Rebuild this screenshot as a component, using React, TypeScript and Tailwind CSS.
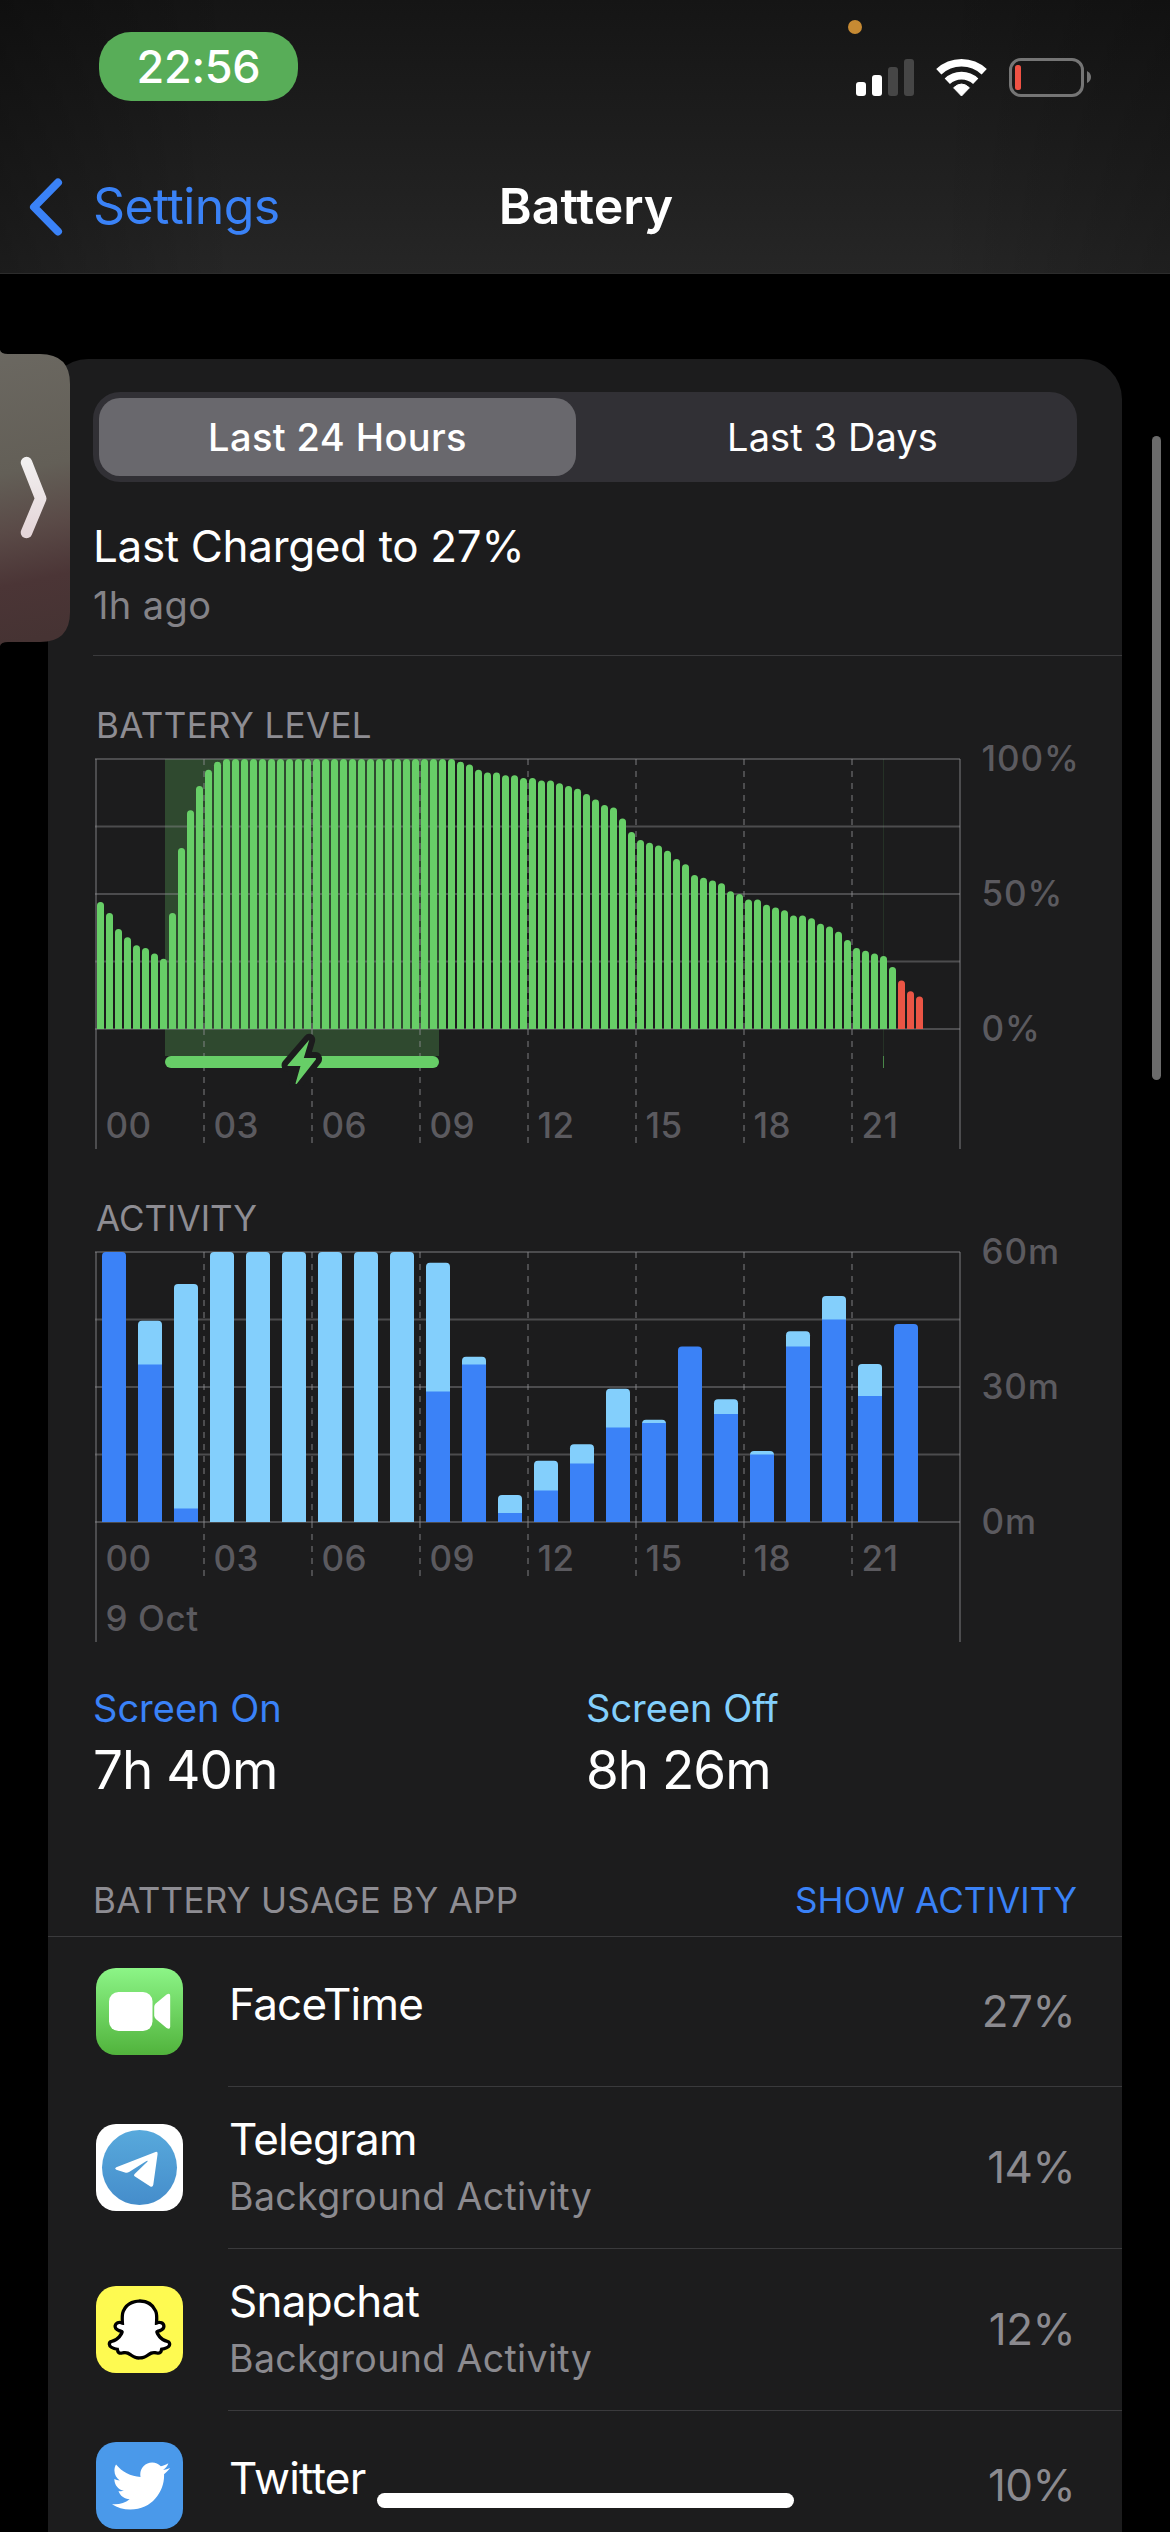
import { FaSnapchatGhost, FaTwitter } from 'react-icons/fa';

// Battery percentage, one sample every 15 minutes
const LEVELS = [
  47, 43, 37, 34, 31, 30, 28, 26, 43, 67, 81, 90, 96, 99, 100, 100,
  100, 100, 100, 100, 100, 100, 100, 100, 100, 100, 100, 100, 100, 100, 100, 100,
  100, 100, 100, 100, 100, 100, 100, 100, 99, 98, 96, 95, 95, 94, 94, 93,
  93, 92, 92, 91, 90, 89, 87, 85, 83, 82, 78, 73, 70, 69, 68, 66,
  63, 61, 57, 56, 55, 54, 51, 50, 48, 48, 46, 45, 44, 42, 42, 41,
  39, 38, 36, 33, 30, 29, 28, 27, 23, 18, 14, 12,
];

// [screen on, total] minutes per hour
const ACTIVITY: [number, number][] = [
  [60, 60], [35, 44.7], [3, 52.9], [0, 60], [0, 60], [0, 60], [0, 60], [0, 60],
  [0, 60], [29, 57.6], [35, 36.7], [2, 6], [7, 13.6], [13, 17.3], [21, 29.6], [22, 22.7],
  [39, 39], [24, 27.3], [15, 15.8], [39, 42.4], [45, 50.2], [28, 35.1], [44, 44],
];

const HOURS = ['00', '03', '06', '09', '12', '15', '18', '21'];

const PLOT_X = 3;
const PLOT_W = 864;
const PLOT_H = 270;
const TOP = 13;
const BOTTOM = TOP + PLOT_H;

function ChartGrid({ tail }: { tail: number }) {
  return (
    <g stroke="#8e8e93" strokeOpacity="0.42" strokeWidth="2" fill="none">
      {[0, 1, 2, 3, 4].map((i) => (
        <path key={i} d={`M${PLOT_X - 1} ${TOP + i * 67.5}H${PLOT_X + PLOT_W}`} />
      ))}
      <path d={`M${PLOT_X} ${TOP}V403M${PLOT_X + PLOT_W} ${TOP}V403`} />
      {HOURS.slice(1).map((hour, i) => {
        const x = PLOT_X + (i + 1) * 108;
        return (
          <path
            key={hour}
            d={`M${x} ${TOP}V${BOTTOM}M${x} ${BOTTOM}V${BOTTOM + tail}`}
            strokeDasharray="6 6"
          />
        );
      })}
    </g>
  );
}

function ChartLabels({ y, scale }: { y: number; scale: string[] }) {
  return (
    <g fill="#5b5a5f" fontSize="35" fontWeight="500">
      {HOURS.map((hour, i) => (
        <text key={hour} x={PLOT_X + 9.5 + i * 108} y={y} letterSpacing="0.4">
          {hour}
        </text>
      ))}
      {scale.map((label, i) => (
        <text key={label} x="888.5" y={TOP + 12 + i * 135} letterSpacing="0.9">
          {label}
        </text>
      ))}
    </g>
  );
}

function BatteryChart() {
  return (
    <svg width="1029" height="404" viewBox="0 0 1029 404" className="block overflow-visible">
      <rect x="72" y={TOP} width="274" height="297" fill="#67ce67" fillOpacity="0.25" />
      <rect x="790" y={TOP} width="1" height="297" fill="#67ce67" fillOpacity="0.12" />
      <rect x="790" y="310" width="1" height="12" fill="#67ce67" fillOpacity="0.6" />
      <ChartGrid tail={114} />
      {LEVELS.map((level, i) => {
        const x = PLOT_X + 1 + i * 9;
        const y = BOTTOM - level * 2.7;
        return (
          <path
            key={i}
            d={`M${x} ${BOTTOM}V${y + 3.5}a3.5 3.5 0 0 1 7 0V${BOTTOM}Z`}
            fill={level <= 20 ? '#eb5545' : '#67ce67'}
          />
        );
      })}
      <rect x="72" y="310" width="274" height="12" rx="6" fill="#67ce67" />
      <path
        d="M216.3 293.8 194.5 319.2Q194.3 320 195 320H207.5L202.5 337.5Q203.2 338.5 204 337.5L223 313.2Q223.2 312 222.3 312H210.8Z"
        fill="#67ce67"
        stroke="#1c1c1d"
        strokeWidth="12"
        strokeLinejoin="round"
        paintOrder="stroke"
      />
      <ChartLabels y={392} scale={['100%', '50%', '0%']} />
    </svg>
  );
}

function ActivityChart() {
  return (
    <svg width="1029" height="404" viewBox="0 0 1029 404" className="block overflow-visible">
      <ChartGrid tail={54} />
      {ACTIVITY.map(([on, total], i) => {
        const x = 9 + i * 36;
        const y = BOTTOM - total * 4.5;
        return (
          <g key={i}>
            <path
              d={`M${x} ${BOTTOM}V${y + 4}q0-4 4-4h16q4 0 4 4V${BOTTOM}Z`}
              fill={on === total ? '#3b82f7' : '#83cffc'}
            />
            {on < total && (
              <rect x={x} y={BOTTOM - on * 4.5} width="24" height={on * 4.5} fill="#3b82f7" />
            )}
          </g>
        );
      })}
      <ChartLabels y={332} scale={['60m', '30m', '0m']} />
      <text x="12.5" y="392" fill="#5b5a5f" fontSize="35" fontWeight="500" letterSpacing="0.6">
        9 Oct
      </text>
    </svg>
  );
}

function StatusIcons() {
  return (
    <svg width="243" height="80" viewBox="0 0 243 80" className="block">
      <circle cx="7" cy="9" r="7" fill="#c68a33" />
      <g fill="#fff">
        <rect x="8" y="64" width="10" height="14" rx="3" />
        <rect x="24" y="57" width="10" height="21" rx="3" />
        <rect x="40" y="49" width="10" height="29" rx="3" fill="#464646" />
        <rect x="56" y="41" width="10" height="37" rx="3" fill="#464646" />
      </g>
      <g fill="none" stroke="#fff" strokeWidth="7.6">
        <path d="M90.8 53.7a33.2 33.2 0 0 1 45.4 0" />
        <path d="M99.3 63.3a20.5 20.5 0 0 1 28.4 0" />
      </g>
      <path d="M113.5 78 105.6 69.8q7.9-7.5 15.8 0Z" fill="#fff" stroke="#fff" strokeWidth="1" strokeLinejoin="round" />
      <rect x="162.5" y="41.5" width="72" height="36" rx="10.5" fill="none" stroke="#757575" strokeWidth="3" />
      <rect x="167" y="47" width="6" height="25" rx="2.5" fill="#ef5244" />
      <path d="M239 53q4 2 4 6t-4 6Z" fill="#757575" />
    </svg>
  );
}

function FaceTimeIcon() {
  return (
    <svg width="87" height="87" viewBox="0 0 87 87">
      <defs>
        <linearGradient id="facetime" x1="0" y1="0" x2="0" y2="1">
          <stop offset="0" stopColor="#8cf587" />
          <stop offset="1" stopColor="#51b33c" />
        </linearGradient>
      </defs>
      <rect width="87" height="87" rx="20" fill="url(#facetime)" />
      <rect x="13" y="24" width="43.5" height="39" rx="9.5" fill="#fff" />
      <path d="M58.2 39q0-2 1.6-3.4L70.6 26.6q3.6-2 3.6 1.4V58.5q0 3.600-3.600 1.600L59.8 51q-1.600-1.400-1.600-3.400Z" fill="#fff" />
    </svg>
  );
}

function TelegramIcon() {
  return (
    <svg width="87" height="87" viewBox="0 0 87 87">
      <defs>
        <linearGradient id="telegram" x1="0" y1="0" x2="0" y2="1">
          <stop offset="0" stopColor="#58a9dc" />
          <stop offset="1" stopColor="#458dcb" />
        </linearGradient>
      </defs>
      <rect width="87" height="87" rx="20" fill="#fff" />
      <circle cx="43.5" cy="43.5" r="37.5" fill="url(#telegram)" />
      <path
        d="M20.300 43.300 59.500 28q2.400-.7 2.100 2L57.300 60.800q-.7 3-3.300 1.500L38.600 52.200q-1.400-1 0-2.300L51.300 37.800q1.200-1.500-.8-.8L33.500 47.700q-2.200 1.500-4.500.8L20.300 45.700q-2.200-1.100 0-2.400Z"
        fill="#fff"
      />
    </svg>
  );
}

function SnapchatIcon() {
  return (
    <div className="flex h-[87px] w-[87px] items-center justify-center rounded-[20px] bg-[#fefa51]">
      <FaSnapchatGhost
        size={57}
        className="overflow-visible fill-white stroke-black stroke-[60px] [paint-order:stroke] [stroke-linejoin:round]"
      />
    </div>
  );
}

function TwitterIcon() {
  return (
    <div className="flex h-[87px] w-[87px] items-center justify-center rounded-[20px] bg-[#4a99ea]">
      <FaTwitter size={58} className="ml-[3px] text-white" />
    </div>
  );
}

const APPS = [
  { name: 'FaceTime', note: '', usage: '27%', icon: <FaceTimeIcon /> },
  { name: 'Telegram', note: 'Background Activity', usage: '14%', icon: <TelegramIcon /> },
  { name: 'Snapchat', note: 'Background Activity', usage: '12%', icon: <SnapchatIcon /> },
  { name: 'Twitter', note: '', usage: '10%', icon: <TwitterIcon /> },
];

function Header() {
  return (
    <header className="h-[274px] border-b border-[#2c2c2c] bg-[linear-gradient(to_right,rgba(0,0,0,0.28),transparent_20%,transparent_80%,rgba(0,0,0,0.2)),linear-gradient(#151515,#262626)]">
      <div className="flex h-[140px] items-start justify-between pr-[79px] pl-[99px]">
        <div className="mt-8 flex h-[69px] w-[199px] items-center justify-center rounded-[32px] bg-[#58ad58] text-[45px] font-medium tracking-[-0.3px] text-white">
          22:56
        </div>
        <div className="mt-[18px]">
          <StatusIcons />
        </div>
      </div>
      <nav className="grid h-[133px] grid-cols-3 items-center">
        <a href="#" className="flex items-center gap-[29px] pl-[29px] text-[50px] tracking-[-0.6px] text-[#3a82f7]">
          <svg width="35" height="58" viewBox="0 0 35 58">
            <path d="M29 4.5 5 29 29 53.5" fill="none" stroke="currentColor" strokeWidth="8" strokeLinecap="round" strokeLinejoin="round" />
          </svg>
          Settings
        </a>
        <h1 className="pl-[2px] text-center text-[50px] font-semibold text-white">Battery</h1>
      </nav>
    </header>
  );
}

export default function App() {
  return (
    <div className="relative h-[2532px] w-[1170px] overflow-hidden bg-black font-['Inter',sans-serif] text-white">
      <Header />

      <main className="mt-[85px] mr-12 ml-12 h-[2173px] rounded-t-[40px] bg-[#1c1c1d] pt-[33px]">
        <div className="mr-[45px] ml-[45px] grid h-[90px] grid-cols-2 rounded-[27px] bg-[#313035] p-1.5 text-[38px]">
          <button className="w-[477px] rounded-[21px] bg-[#69686d] font-medium tracking-[0.4px]">
            Last 24 Hours
          </button>
          <button className="pl-[9px] font-normal tracking-[0.1px]">Last 3 Days</button>
        </div>

        <section className="ml-[45px] h-[174px] border-b border-[#3a3a3c] pt-9">
          <p className="text-[44px] leading-[56px] tracking-[-0.35px]">Last Charged to 27%</p>
          <p className="mt-1 text-[38px] leading-[54px] tracking-[0.4px] text-[#848388]">1h ago</p>
        </section>

        <section className="ml-[45px] pt-[45px]">
          <h2 className="pl-[3px] text-[35px] leading-[48px] tracking-[0.35px] text-[#8e8d93]">BATTERY LEVEL</h2>
          <div className="-mt-[3px]">
            <BatteryChart />
          </div>
        </section>

        <section className="ml-[45px] pt-11">
          <h2 className="pl-[3px] text-[35px] leading-[48px] text-[#8e8d93]">ACTIVITY</h2>
          <div className="-mt-[3px]">
            <ActivityChart />
          </div>
        </section>

        <section className="mr-[45px] ml-[45px] grid grid-cols-2 pt-[38px]">
          <div>
            <p className="text-[38px] leading-[54px] text-[#3a82f7]">Screen On</p>
            <p className="mt-[3px] text-[53px] leading-[64px] tracking-[-1px]">7h 40m</p>
          </div>
          <div className="pl-px">
            <p className="text-[38px] leading-[54px] text-[#82cffc]">Screen Off</p>
            <p className="mt-[3px] text-[53px] leading-[64px] tracking-[-1px]">8h 26m</p>
          </div>
        </section>

        <section className="pt-[74px]">
          <div className="flex h-[61px] items-start justify-between border-b border-[#3a3a3c] pr-[45px] pl-[45px] text-[35px] leading-[48px]">
            <h2 className="tracking-[0.3px] text-[#8e8d93]">BATTERY USAGE BY APP</h2>
            <button className="tracking-[0.1px] text-[#3a82f7]">SHOW ACTIVITY</button>
          </div>
          <ul>
            {APPS.map((app) => (
              <li key={app.name} className="flex items-center pl-12">
                <div className="-mt-px h-[87px] w-[87px] shrink-0">{app.icon}</div>
                <div
                  className={`ml-[45px] flex flex-1 items-center justify-between border-b border-[#3a3a3c] pr-[47px] ${
                    app.note ? 'h-[162px]' : 'h-[150px]'
                  }`}
                >
                  <div className={app.note ? 'pl-[1px]' : 'pb-4 pl-[1px]'}>
                    <p className="text-[44px] leading-[58px] tracking-[-0.75px]">{app.name}</p>
                    {app.note && (
                      <p className="text-[37.5px] leading-[58px] tracking-[0.35px] text-[#8b8a8f]">{app.note}</p>
                    )}
                  </div>
                  <span className="pb-[1px] text-[44px] tracking-[-0.6px] text-[#8b8a8f]">{app.usage}</span>
                </div>
              </li>
            ))}
          </ul>
        </section>
      </main>

      {/* collapsed picture-in-picture handle */}
      <svg width="72" height="300" viewBox="0 0 72 300" className="absolute top-[348px] left-0">
        <defs>
          <linearGradient id="pip" x1="0" y1="0" x2="0.05" y2="1">
            <stop offset="0" stopColor="#6b6861" />
            <stop offset="0.42" stopColor="#635f57" />
            <stop offset="0.62" stopColor="#5a4a47" />
            <stop offset="0.8" stopColor="#4b3536" />
            <stop offset="1" stopColor="#463333" />
          </linearGradient>
          <linearGradient id="pip-arrow" x1="0" y1="0" x2="0" y2="1">
            <stop offset="0" stopColor="#f1efef" />
            <stop offset="1" stopColor="#e5d6d9" />
          </linearGradient>
        </defs>
        <path d="M0 2Q1 6 8 6H40Q70 6 70 36V264Q70 294 40 294H8Q1 294 0 298Z" fill="url(#pip)" />
        <path d="M26.5 114.5 40.5 150Q41 150.5 40.5 151L26.5 184.5" fill="none" stroke="url(#pip-arrow)" strokeWidth="11.5" strokeLinecap="round" strokeLinejoin="round" />
      </svg>

      <div className="absolute top-[436px] left-[1152px] h-[644px] w-[9px] rounded-full bg-[#6b6b6b]" />
      <div className="absolute bottom-[24px] left-[377px] h-[15px] w-[417px] rounded-full bg-white" />
    </div>
  );
}
